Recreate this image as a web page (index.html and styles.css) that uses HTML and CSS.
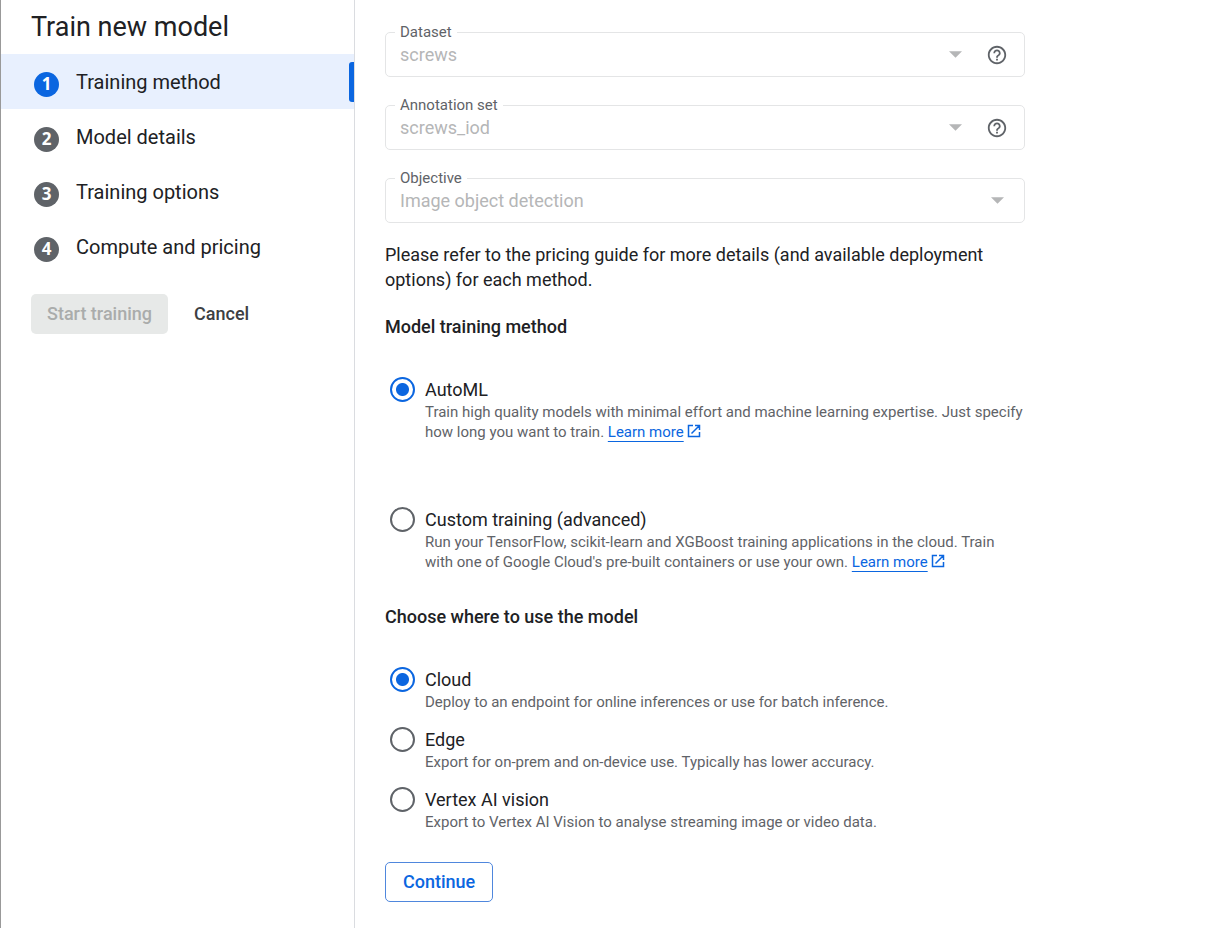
FILE: index.html
```html
<!DOCTYPE html>
<html lang="en">
<head>
  <meta charset="UTF-8">
  <meta name="viewport" content="width=device-width, initial-scale=1">
  <title>Train new model</title>
  <link rel="stylesheet" href="styles.css">
</head>
<body>
  <div class="panel">

    <!-- Stepper -->
    <aside class="sidebar">
      <h1 class="title">Train new model</h1>
      <nav class="steps">
        <a href="#method" class="step active" aria-current="step"><span class="num">1</span><span>Training method</span></a>
        <a href="#details" class="step"><span class="num">2</span><span>Model details</span></a>
        <a href="#options" class="step"><span class="num">3</span><span>Training options</span></a>
        <a href="#pricing" class="step"><span class="num">4</span><span>Compute and pricing</span></a>
      </nav>
      <div class="actions">
        <button type="button" class="btn btn-start" disabled>Start training</button>
        <button type="button" class="btn btn-cancel">Cancel</button>
      </div>
    </aside>

    <!-- Training method form -->
    <main class="content">
      <form class="form" id="method">
        <div class="fields">
          <div class="field">
            <label for="dataset">Dataset</label>
            <select id="dataset" disabled><option>screws</option></select>
            <svg class="arrow" viewBox="0 0 12 6"><path d="M0 0h12L6 6z"/></svg>
            <button type="button" class="help" aria-label="Help">
              <svg viewBox="0 0 24 24"><path d="M11 18h2v-2h-2v2zm1-16C6.480 2 2 6.480 2 12s4.480 10 10 10 10-4.480 10-10S17.520 2 12 2zm0 18c-4.410 0-8-3.590-8-8s3.590-8 8-8 8 3.590 8 8-3.590 8-8 8zm0-14c-2.210 0-4 1.790-4 4h2c0-1.100.9-2 2-2s2 .9 2 2c0 2-3 1.750-3 5h2c0-2.250 3-2.500 3-5 0-2.210-1.790-4-4-4z"/></svg>
            </button>
          </div>
          <div class="field">
            <label for="annotation">Annotation set</label>
            <select id="annotation" disabled><option>screws_iod</option></select>
            <svg class="arrow" viewBox="0 0 12 6"><path d="M0 0h12L6 6z"/></svg>
            <button type="button" class="help" aria-label="Help">
              <svg viewBox="0 0 24 24"><path d="M11 18h2v-2h-2v2zm1-16C6.480 2 2 6.480 2 12s4.480 10 10 10 10-4.480 10-10S17.520 2 12 2zm0 18c-4.410 0-8-3.590-8-8s3.590-8 8-8 8 3.590 8 8-3.590 8-8 8zm0-14c-2.210 0-4 1.790-4 4h2c0-1.100.9-2 2-2s2 .9 2 2c0 2-3 1.750-3 5h2c0-2.250 3-2.500 3-5 0-2.210-1.790-4-4-4z"/></svg>
            </button>
          </div>
          <div class="field">
            <label for="objective">Objective</label>
            <select id="objective" disabled><option>Image object detection</option></select>
            <svg class="arrow" viewBox="0 0 12 6"><path d="M0 0h12L6 6z"/></svg>
          </div>
        </div>

        <p class="intro">Please refer to the pricing guide for more details (and available deployment options) for each method.</p>

        <h2 class="heading" id="training-heading">Model training method</h2>
        <div class="group group-wide" role="radiogroup" aria-labelledby="training-heading">
          <div class="option">
            <input type="radio" name="training" id="automl" checked>
            <div class="option-text">
              <label for="automl">AutoML</label>
              <p>Train high quality models with minimal effort and machine learning expertise. Just specify how long you want to train. <a href="#">Learn more</a><svg class="external" viewBox="0 0 14 14"><path d="M6 1.500H1.500v11h11V8M8 1.500h4.500V6M12.500 1.500l-8 8"/></svg></p>
            </div>
          </div>
          <div class="option">
            <input type="radio" name="training" id="custom">
            <div class="option-text">
              <label for="custom">Custom training (advanced)</label>
              <p>Run your TensorFlow, scikit-learn and XGBoost training applications in the cloud. Train with one of Google Cloud's pre-built containers or use your own. <a href="#">Learn more</a><svg class="external" viewBox="0 0 14 14"><path d="M6 1.500H1.500v11h11V8M8 1.500h4.500V6M12.500 1.500l-8 8"/></svg></p>
            </div>
          </div>
        </div>

        <h2 class="heading" id="target-heading">Choose where to use the model</h2>
        <div class="group" role="radiogroup" aria-labelledby="target-heading">
          <div class="option">
            <input type="radio" name="target" id="cloud" checked>
            <div class="option-text">
              <label for="cloud">Cloud</label>
              <p>Deploy to an endpoint for online inferences or use for batch inference.</p>
            </div>
          </div>
          <div class="option">
            <input type="radio" name="target" id="edge">
            <div class="option-text">
              <label for="edge">Edge</label>
              <p>Export for on-prem and on-device use. Typically has lower accuracy.</p>
            </div>
          </div>
          <div class="option">
            <input type="radio" name="target" id="vision">
            <div class="option-text">
              <label for="vision">Vertex AI vision</label>
              <p>Export to Vertex AI Vision to analyse streaming image or video data.</p>
            </div>
          </div>
        </div>

        <button type="button" class="btn btn-continue">Continue</button>
      </form>
    </main>

  </div>
</body>
</html>
```
FILE: styles.css
```css
* {
  box-sizing: border-box;
}

body {
  margin: 0;
  font-family: Roboto, "Liberation Sans", sans-serif;
  font-size: 18px;
  color: #202124;
  background-color: #fff;
}

h1, h2, p {
  margin: 0;
}

.panel {
  display: flex;
  min-height: 100vh;
  border-left: 1px solid #999;
}

/* Sidebar */
.sidebar {
  flex: 0 0 354px;
  border-right: 1px solid #dadce0;
}

.title {
  padding: 10px 30px;
  font-size: 27px;
  font-weight: 400;
  line-height: 34px;
}

.step {
  display: flex;
  align-items: center;
  gap: 17px;
  height: 55px;
  padding-left: 33px;
  font-size: 20px;
  color: #202124;
  text-decoration: none;
}

.step.active {
  background-color: #e8f0fe;
  position: relative;
}

.step.active::after {
  content: "";
  position: absolute;
  top: 8px;
  right: 0;
  width: 5px;
  height: 40px;
  border-radius: 3px 0 0 3px;
  background-color: #0b66e0;
}

.num {
  width: 25px;
  height: 25px;
  margin-top: 5px;
  border-radius: 50%;
  background-color: #5f6368;
  color: #fff;
  font-family: "Open Sans", sans-serif;
  font-size: 17px;
  font-weight: 700;
  line-height: 23px;
  text-align: center;
}

.active .num {
  background-color: #0b66e0;
}

.actions {
  display: flex;
  gap: 10px;
  padding: 20px 30px;
}

.btn {
  height: 40px;
  padding: 0 15px 2px;
  border: 1px solid transparent;
  border-radius: 5px;
  background-color: transparent;
  font-family: inherit;
  font-size: 18px;
  font-weight: 500;
  cursor: pointer;
}

.btn-start {
  background-color: #e7e9e8;
  color: #aaacab;
  cursor: default;
}

.btn-cancel {
  color: #3c4043;
}

.btn-continue {
  margin-top: 30px;
  padding: 0 17px 2px;
  border-color: #4f87dd;
  color: #0b66e0;
}

/* Form */
.content {
  flex: 1;
  min-width: 0;
  padding: 32px 30px 26px;
}

.form {
  max-width: 640px;
}

.fields {
  display: flex;
  flex-direction: column;
  gap: 28px;
}

.field {
  position: relative;
  display: flex;
  align-items: center;
  height: 45px;
  padding-right: 16px;
  border: 1px solid #e4e5e6;
  border-radius: 5px;
}

.field label {
  position: absolute;
  top: -11px;
  left: 9px;
  padding: 0 5px;
  background-color: #fff;
  color: #5f6368;
  font-size: 15px;
  line-height: 20px;
}

.field select {
  flex: 1;
  min-width: 0;
  height: 43px;
  padding: 0 14px;
  border: none;
  appearance: none;
  background: none;
  font-family: inherit;
  font-size: 18px;
  color: #b5b6b7;
  opacity: 1;
}

.arrow {
  width: 13px;
  height: 7px;
  margin: 0 4px;
  fill: #b5b6b7;
}

.help {
  width: 22px;
  height: 22px;
  margin-left: 20px;
  padding: 0;
  border: none;
  background: none;
  cursor: pointer;
}

.help svg {
  display: block;
  width: 22px;
  height: 22px;
  fill: #5f6368;
}

.intro {
  margin-top: 19px;
  line-height: 25px;
}

.heading {
  margin: 22px 0 38px;
  font-size: 18px;
  font-weight: 500;
  line-height: 25px;
}

.group {
  display: flex;
  flex-direction: column;
  gap: 15px;
}

.group-wide {
  gap: 65px;
  margin-bottom: 32px;
}

.option {
  display: flex;
  gap: 10px;
  padding-left: 5px;
}

.option input {
  appearance: none;
  flex: none;
  width: 25px;
  height: 25px;
  margin: 0;
  border: 2px solid #5f6368;
  border-radius: 50%;
}

.option input:checked {
  border-color: #0b66e0;
  background: radial-gradient(circle, #0b66e0 6px, transparent 7px);
}

.option label {
  display: block;
  line-height: 25px;
}

.option p {
  color: #5f6368;
  font-size: 15px;
  line-height: 20px;
}

.option a {
  color: #0b66e0;
  text-decoration: underline 1px;
  text-underline-offset: 4px;
}

.external {
  width: 14px;
  height: 14px;
  margin-left: 3px;
  vertical-align: -1px;
  fill: none;
  stroke: #0b66e0;
  stroke-width: 1.500;
}
```
